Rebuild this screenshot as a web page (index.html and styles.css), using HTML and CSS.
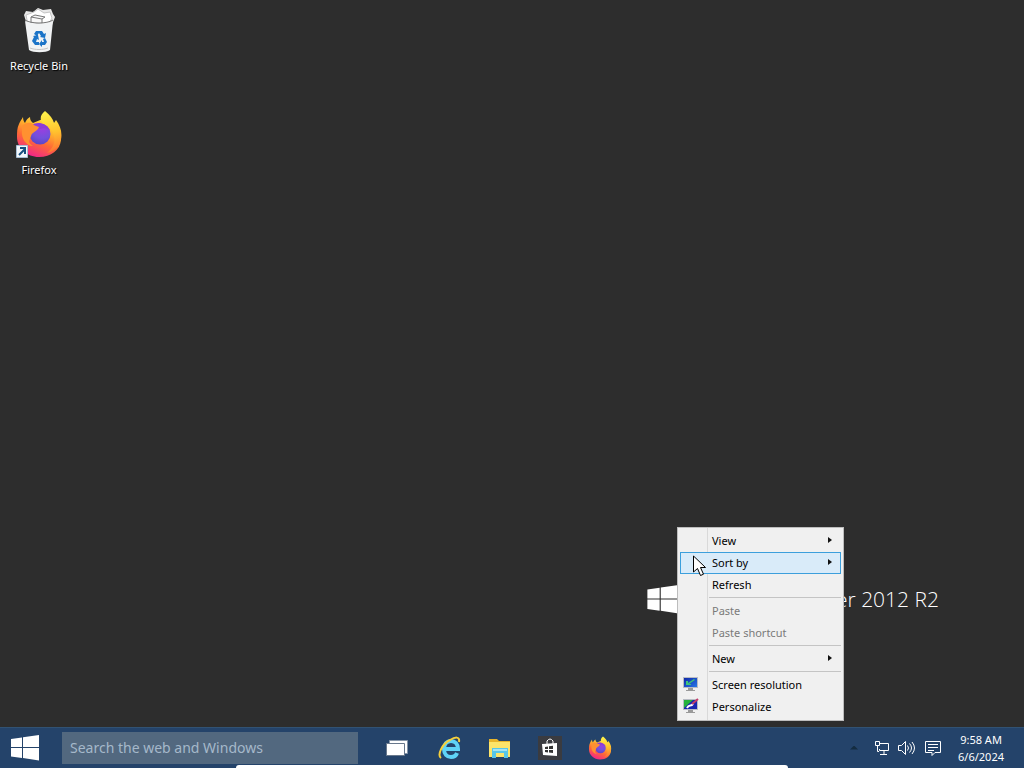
FILE: index.html
```html
<!DOCTYPE html>
<html lang="en">
<head>
<meta charset="utf-8">
<title>Desktop</title>
<link rel="stylesheet" href="styles.css">
</head>
<body>
<svg class="defs" width="0" height="0" aria-hidden="true">
  <defs>
    <linearGradient id="fox-body" x1="0.8" y1="0" x2="0.3" y2="1">
      <stop offset="0" stop-color="#fff04a"/><stop offset="0.35" stop-color="#ffb22c"/>
      <stop offset="0.62" stop-color="#ff6a35"/><stop offset="1" stop-color="#f0208f"/>
    </linearGradient>
    <linearGradient id="fox-tail" x1="0.5" y1="0" x2="0.6" y2="1">
      <stop offset="0" stop-color="#fff24a"/><stop offset="0.5" stop-color="#ffc32e"/><stop offset="1" stop-color="#ff7034"/>
    </linearGradient>
    <radialGradient id="fox-globe" cx="0.6" cy="0.2" r="0.9">
      <stop offset="0" stop-color="#a03ce0"/><stop offset="0.55" stop-color="#7350dc"/><stop offset="1" stop-color="#5543c0"/>
    </radialGradient>
    <linearGradient id="screen" x1="0" y1="0" x2="1" y2="1">
      <stop offset="0" stop-color="#1028a8"/><stop offset="1" stop-color="#2878e8"/>
    </linearGradient>
    <symbol id="firefox" viewBox="0 0 46 48">
      <path fill="url(#fox-body)" d="M3 14C4 11 6 9 7 7c0 3 1 5 2 6 1-3 3-5 5-6 0 3 1 4 3 6l12-5 9 5c6 5 8 11 7 17-1 10-10 17-22 17S1 38 1 27c0-5 0-9 2-13z"/>
      <path fill="url(#fox-tail)" d="M29 1c5 4 8 8 9 12l2-3c5 7 7 14 4 22-2 6-8 10-13 11 6-5 9-11 7-17-1-6-5-9-10-12-5-4-4-9 1-13z"/>
      <circle cx="24" cy="24" r="10.500" fill="url(#fox-globe)"/>
      <path fill="#8c3bd8" d="M16 15c5-4 14-2 18 5-4-2-7-2-10-1z"/>
      <path fill="#ff9130" d="M6 16c4-4 9-4 12-1 1 1 3 1 5 2-1 3-4 4-6 6-2 1-2 4-3 6-2 3 0 5 3 7-7 0-12-8-11-15z"/>
    </symbol>
    <symbol id="winlogo" viewBox="0 0 28 26">
      <path fill="#fff" d="M0 4l11-1.600V12H0zM12 2.200L28 0v12H12zM0 13h11v10L0 21.600zM12 13h16v12.500L12 23z"/>
    </symbol>
  </defs>
</svg>
<div class="desktop">
  <main class="workspace">
    <nav class="shortcuts" aria-label="Desktop icons">
      <a class="shortcut" href="#recycle">
        <svg width="46" height="50" viewBox="0 0 46 50" aria-hidden="true">
          <path fill="#e8e8e8" d="M8 9l2-4 7 1 5-4 5 2 8-1 2 5 2 3-3 8H11z"/>
          <path fill="#fff" stroke="#c4c4c4" d="M10 9l8-3 4-3 6 4 6-1 2 6-4 7H12z"/>
          <path fill="#f8f8f8" stroke="#777" d="M15 11l11 2v5l-11-1zM15 11l4-2 10 2-3 2"/>
          <path fill="#f1f3f4" d="M9 15c5 3 23 3 28 0l-3 29c-4 3-17 3-21 0z"/>
          <path fill="none" stroke="#777" d="M9 14c6 4 22 4 28 0"/>
          <path fill="none" stroke="#c4c4c4" d="M14 42c5 2 13 2 18 0"/>
          <path fill="#1b74c8" d="M20 25h6l2 3 2-1-1 5-5-1 1-1-2-3-2 3-3-2zM17 30l5-1 1 5-2-1-1 3h3v3h-4l-3-4 2-4zM29 32l2 4-2 3h-3v2l-3-3 3-4v2h2l-1-3z"/>
        </svg>
        <span>Recycle Bin</span>
      </a>
      <a class="shortcut" href="#firefox-app">
        <svg width="46" height="50" viewBox="0 0 46 50" aria-hidden="true">
          <use href="#firefox" width="46" height="48"/>
          <path fill="#f2f7fc" stroke="#a7bfd4" d="M.5 35.500h11v12H.5z"/>
          <path fill="none" stroke="#17507f" stroke-width="2" d="M3 45l6-6M4 38h5v6"/>
        </svg>
        <span>Firefox</span>
      </a>
    </nav>
    <div class="brand">
      <svg width="32" height="29" aria-hidden="true"><use href="#winlogo" width="32" height="29"/></svg>
      <span>er 2012 R2</span>
    </div>
    <div class="menu" role="menu">
      <button class="item" role="menuitem"><span>View</span><i class="arrow"></i></button>
      <button class="item selected" role="menuitem"><span>Sort by</span><i class="arrow"></i></button>
      <button class="item" role="menuitem"><span>Refresh</span></button>
      <hr class="rule">
      <button class="item" role="menuitem" disabled><span>Paste</span></button>
      <button class="item" role="menuitem" disabled><span>Paste shortcut</span></button>
      <hr class="rule">
      <button class="item" role="menuitem"><span>New</span><i class="arrow"></i></button>
      <hr class="rule">
      <button class="item" role="menuitem">
        <svg class="glyph" width="16" height="16" viewBox="0 0 16 16" aria-hidden="true">
          <path fill="#b8bcc4" d="M0 1h15v11H0z"/><path fill="url(#screen)" d="M1 2h13v9H1z"/>
          <path fill="#3fc47a" d="M3 5h2v2l6-4 1 1-6 4h2v1H3z"/><path fill="#9a9a9a" d="M5 12h5v2h2v1H3v-1h2z"/>
        </svg>
        <span>Screen resolution</span></button>
      <button class="item" role="menuitem">
        <svg class="glyph" width="16" height="16" viewBox="0 0 16 16" aria-hidden="true">
          <path fill="#b8bcc4" d="M0 1h15v11H0z"/><path fill="#1824b0" d="M1 2h13v9H1z"/>
          <path fill="#25b23c" d="M1 2h9L1 10z"/><path fill="none" stroke="#fff" stroke-width="2" d="M4 10c2-4 4-1 6-4"/>
          <path fill="none" stroke="#c23c6a" stroke-width="2" d="M9 6l6-5"/><path fill="#9a9a9a" d="M5 12h5v2h2v1H3v-1h2z"/>
        </svg>
        <span>Personalize</span></button>
    </div>
    <svg class="pointer" width="13" height="22" viewBox="0 0 13 22" aria-hidden="true">
      <path fill="#fff" stroke="#000" d="M.5 1v16l4-3.500 3 7 3-1.300-3-6.700h5z"/>
    </svg>
  </main>
  <footer class="taskbar">
    <button class="start" aria-label="Start"><svg width="28" height="26" aria-hidden="true"><use href="#winlogo" width="28" height="26"/></svg></button>
    <input class="search" type="text" aria-label="Search" placeholder="Search the web and Windows">
    <nav class="apps" aria-label="Pinned apps">
      <button class="app" aria-label="Task view"><svg width="27" height="24" viewBox="0 0 27 24"><path fill="#fff" stroke="#8595a8" d="M4.500 4.500h18v13h-18z"/><path fill="#fff" stroke="#68788c" d="M1.500 7.500h18v12h-18z"/></svg></button>
      <button class="app" aria-label="Internet Explorer"><svg width="24" height="24" viewBox="0 0 24 24">
        <path fill="none" stroke="#5fd3f6" stroke-width="4" d="M6 13h14c0-5-3-8-7-8s-7 3-7 8 3 8 7 8c3 0 5-1 6-4"/>
        <path fill="none" stroke="#f6cf3c" stroke-width="2" d="M3 22C-1 19 4 8 12 4c5-3 10-4 9 2"/></svg></button>
      <button class="app" aria-label="File Explorer"><svg width="24" height="24" viewBox="0 0 24 24">
        <path fill="#e9b52b" d="M1 3h8l2 2h11v16H1z"/><path fill="#fde46a" d="M1 6h21v15H1z"/>
        <path fill="#58c6e8" d="M4 12h16v10h-4v-5H8v5H4z"/><path fill="#a5e4f4" d="M5 13h14v2H5z"/></svg></button>
      <button class="app" aria-label="Store"><svg width="24" height="24" viewBox="0 0 24 24">
        <path fill="#3a3b40" d="M0 0h24v24H0z"/><path fill="none" stroke="#fff" d="M9 8V5q3-4 6 0v3"/><path fill="#fff" d="M4 8l15-1v13L5 19z"/>
        <path fill="#333" d="M7 11l3-.5V13H7zM11 10.300l4-.5V13h-4zM7 14h3v2.500L7 16zM11 14h4v3l-4-.4z"/></svg></button>
      <button class="app" aria-label="Firefox"><svg width="24" height="24"><use href="#firefox" width="24" height="24"/></svg></button>
    </nav>
    <div class="tray">
      <button class="chevron" aria-label="Show hidden icons"></button>
      <button class="status" aria-label="Network"><svg width="16" height="16" viewBox="0 0 16 16" fill="none" stroke="#fff"><path d="M6 3.500h8.500v7H5.500V9M10 11v3M6 14.500h7M1.500 1.500h4v4h-4zM3.500 5.500v6H5"/></svg></button>
      <button class="status" aria-label="Volume"><svg width="18" height="16" viewBox="0 0 18 16" fill="none" stroke="#fff"><path d="M.5 5.500h3l4-4v13l-4-4h-3zM9.500 5.500q2 2.500 0 5M11.500 3.500q4 4.500 0 9M14 2q5 6 0 12"/></svg></button>
      <button class="status" aria-label="Notifications"><svg width="18" height="18" viewBox="0 0 18 18" fill="none" stroke="#fff"><path d="M1.500 2.500h15v11H11l-3 3v-3H1.500zM4 5.500h10M4 8.500h10M4 11.500h6"/></svg></button>
      <time class="clock" datetime="2024-06-06T09:58"><span>9:58 AM</span><span>6/6/2024</span></time>
    </div>
  </footer>
  <div class="handle"></div>
</div>
</body>
</html>
```

FILE: styles.css
```css
* { box-sizing: border-box; }
body { margin: 0; font-family: "Noto Sans", "Open Sans", sans-serif; font-size: 11px; }
button { border: 0; background: none; padding: 0; font: inherit; color: inherit; }
svg { display: block; flex: none; }
.defs { position: absolute; }

.desktop {
  position: relative;
  display: flex;
  flex-direction: column;
  min-height: 100vh;
  overflow: hidden;
  background: #2d2d2d;
}
.workspace { position: relative; flex: 1; }

.shortcuts { display: flex; flex-direction: column; width: 78px; padding-top: 6px; gap: 32px; }
.shortcut {
  display: flex;
  flex-direction: column;
  align-items: center;
  gap: 2px;
  height: 72px;
  line-height: 16px;
  color: #fff;
  text-decoration: none;
  text-shadow: 1px 1px 1px #000;
}

.brand {
  position: absolute;
  right: 85px;
  bottom: 112px;
  display: flex;
  align-items: center;
  justify-content: space-between;
  width: 292px;
  color: #fff;
  font: 300 21px/32px "Open Sans", sans-serif;
  white-space: nowrap;
}

.menu {
  position: absolute;
  right: 180px;
  bottom: 6px;
  width: 167px;
  padding: 2px;
  border: 1px solid #bdbdbd;
  background: linear-gradient(to right, #f0f0f0 27px, #d9d9d9 27px, #d9d9d9 28px, #f0f0f0 28px);
  background-position: 2px 0;
}
.item {
  position: relative;
  display: flex;
  align-items: center;
  justify-content: space-between;
  width: 100%;
  height: 22px;
  padding: 0 9px 2px 32px;
  color: #000;
  text-align: left;
  white-space: nowrap;
}
.item:disabled { color: #7a7a7a; }
.selected { background: #d9ebf9; box-shadow: inset 0 0 0 1px #3c9fdc; }
.arrow { border: 3px solid transparent; border-left: 4px solid #111; border-right: 0; }
.glyph { position: absolute; left: 3px; top: 2px; }
.rule { height: 1px; margin: 1px 0 2px 29px; border: 0; background: #c4c4c4; }
.pointer { position: absolute; right: 318px; bottom: 150px; }

.taskbar {
  display: flex;
  align-items: center;
  height: 41px;
  padding-bottom: 1px;
  background: #24436a;
  border-top: 1px solid #315273;
  color: #fff;
}
.start { display: flex; justify-content: center; width: 50px; margin-right: 12px; }
.search {
  flex: 0 1 296px;
  min-width: 0;
  height: 32px;
  padding: 0 8px;
  border: 0;
  background: #52687f;
  color: #fff;
  font: 14px "Noto Sans", sans-serif;
}
.search::placeholder { color: #a5b8ca; opacity: 1; }
.apps { display: flex; gap: 26px; padding-left: 27px; }
.tray { display: flex; align-items: center; gap: 8px; margin-left: auto; padding-right: 20px; }
.chevron { width: 8px; height: 4px; margin-right: 8px; background: #142c40; clip-path: polygon(50% 0, 100% 100%, 0 100%); }
.clock { display: flex; flex-direction: column; align-items: center; margin-left: 8px; line-height: 17px; }

.handle {
  position: absolute;
  left: 23%;
  right: 23%;
  bottom: 0;
  height: 3px;
  border-radius: 6px 6px 0 0;
  background: #fff;
}
```
